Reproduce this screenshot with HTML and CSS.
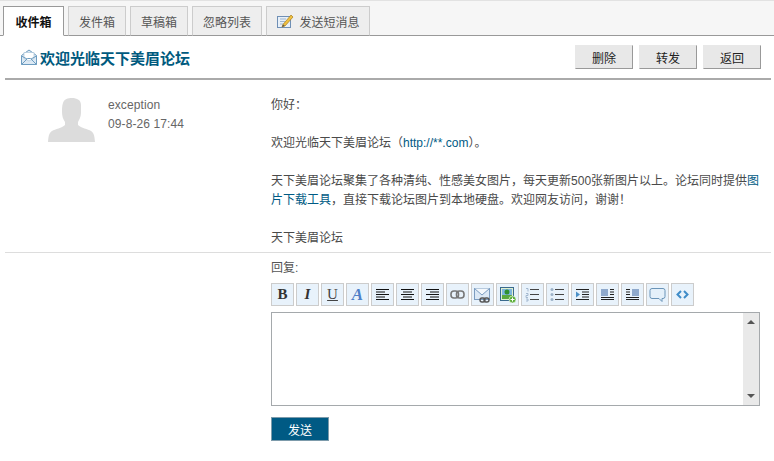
FILE: index.html
```html
<!DOCTYPE html>
<html lang="zh-CN">

<head>
  <meta charset="UTF-8" />
  <title>短消息</title>
  <link rel="stylesheet" href="styles.css">
</head>

<body>
  <nav class="tabs">
    <a class="tab tab-first valgt">收件箱</a>
    <a class="tab tab-out">发件箱</a>
    <a class="tab tab-draft">草稿箱</a>
    <a class="tab tab-ignore">忽略列表</a>
    <a class="tab tab-send">
      <svg width="18" height="16" viewBox="0 0 18 16">
        <rect x="1.500" y="3.500" width="13" height="11" fill="#e8f0f8" stroke="#6f8fb5" />
        <path d="M4 6h6M4 8.500h5M4 11h4" stroke="#9fb4cc" />
        <path d="M7 11.500 15 2l2 2-8 9-3 1z" fill="#f0c040" stroke="#a87c18" stroke-width=".7" />
        <path d="M6 14l1-2.500 1.800 1.300z" fill="#555" />
      </svg>
      发送短消息
    </a>
  </nav>

  <header class="title-row">
    <h1 class="title">
      <svg width="18" height="18" viewBox="0 0 18 18">
        <path d="M1.500 7.500 9 2l7.500 5.500V16.500H1.500z" fill="#dce9f4" stroke="#6d9cc0" />
        <path d="M4 4.500h10v6L9 13 4 10.500z" fill="#fff" stroke="#a9c4d9" stroke-width=".7" />
        <path d="M1.500 16.500 7.500 10.500h3l6 6M1.500 8 7 11M16.500 8 11 11" fill="none" stroke="#6d9cc0" />
      </svg>
      欢迎光临天下美眉论坛
    </h1>
    <div class="actions">
      <button class="knap">删除</button>
      <button class="knap">转发</button>
      <button class="knap">返回</button>
    </div>
  </header>

  <section class="message">
    <div class="avatar">
      <svg width="47" height="44" viewBox="0 0 47 44">
        <path d="M15 5C16 1 20 0 24 0 29 0 33 2 33 7L33 15C33 19 31 22 30 24L30 27C33 30 40 31 43 33 46 35 46.500 38 47 44H0C.5 38 1 35 4 33 7 31 14 30 17 27L17 24C15 21 14 18 14 14 14 10 14 8 15 5Z" fill="#dcdcdc" />
      </svg>
    </div>
    <div class="sender">
      <p>exception</p>
      <p>09-8-26 17:44</p>
    </div>
    <div class="body">
      <p class="para">你好<span class="punct">：</span></p>
      <p class="para">欢迎光临天下美眉论坛（<a href="#">http://**.com</a>）。</p>
      <p class="para">天下美眉论坛聚集了各种清纯、性感美女图片<span class="punct">，</span>每天更新500张新图片以上。论坛同时提供<a href="#">图</a><a href="#">片下载工具</a><span class="punct">，</span>直接下载论坛图片到本地硬盘。欢迎网友访问<span class="punct">，</span>谢谢<span class="punct">！</span></p>
      <p>天下美眉论坛</p>
    </div>
  </section>

  <section class="reply">
    <label class="reply-label">回复:</label>

    <div class="toolbar">
      <span class="tool"><b class="t-b">B</b></span>
      <span class="tool"><i class="t-i">I</i></span>
      <span class="tool"><u class="t-u">U</u></span>
      <span class="tool"><i class="t-a">A</i></span>
      <span class="tool"><svg width="15" height="13" viewBox="0 0 15 13"><path d="M1 1.500h13M1 4h9M1 6.500h13M1 9h9M1 11.500h13" stroke="#111" /></svg></span>
      <span class="tool"><svg width="15" height="13" viewBox="0 0 15 13"><path d="M1 1.500h13M3 4h9M1 6.500h13M3 9h9M1 11.500h13" stroke="#111" /></svg></span>
      <span class="tool"><svg width="15" height="13" viewBox="0 0 15 13"><path d="M1 1.500h13M5 4h9M1 6.500h13M5 9h9M1 11.500h13" stroke="#111" /></svg></span>
      <span class="tool"><svg width="15" height="9" viewBox="0 0 15 9"><rect x="1" y="1" width="7.500" height="7" rx="3" fill="none" stroke="#777" stroke-width="1.600" /><rect x="6.500" y="1" width="7.500" height="7" rx="3" fill="none" stroke="#777" stroke-width="1.600" /></svg></span>
      <span class="tool"><svg width="19" height="18" viewBox="0 0 19 18"><rect x="1.500" y="2.500" width="15" height="11" fill="#dbe8f5" stroke="#7b9cc0" /><path d="M1.500 2.500 9 9l7.500-6.500" fill="#f4f8fc" stroke="#7b9cc0" /><rect x="7" y="12" width="5" height="4" rx="2" fill="none" stroke="#555" stroke-width="1.400" /><rect x="11" y="12" width="5" height="4" rx="2" fill="none" stroke="#555" stroke-width="1.400" /></svg></span>
      <span class="tool"><svg width="18" height="18" viewBox="0 0 18 18"><rect x="1.500" y="1.500" width="13" height="13" fill="#dff0d0" stroke="#3a6a8c" /><rect x="3" y="3" width="10" height="6" fill="#7fb6de" /><circle cx="8" cy="6" r="2.500" fill="#2f8f2f" /><rect x="3" y="9" width="10" height="4" fill="#5aa83c" /><circle cx="13.500" cy="13.500" r="3.500" fill="#5cae3a" stroke="#fff" stroke-width=".6" /><path d="M11.500 13.500h4M13.500 11.500v4" stroke="#fff" /></svg></span>
      <span class="tool"><svg width="15" height="15" viewBox="0 0 15 15"><path d="M5 2.500h9M5 7.500h9M5 12.500h9" stroke="#444" /><path d="M1 1.500h2v3M1 6.500h2v2H1v2h2M1 12h2v2H1" fill="none" stroke="#8aa4c0" stroke-width=".7" /></svg></span>
      <span class="tool"><svg width="15" height="15" viewBox="0 0 15 15"><path d="M5 2.500h9M5 7.500h9M5 12.500h9" stroke="#444" /><circle cx="2" cy="2.500" r="1.500" fill="#9cb2c8" /><circle cx="2" cy="7.500" r="1.500" fill="#9cb2c8" /><circle cx="2" cy="12.500" r="1.500" fill="#9cb2c8" /></svg></span>
      <span class="tool"><svg width="15" height="13" viewBox="0 0 15 13"><path d="M1 1.500h13M7 4h7M7 6.500h7M7 9h7M1 11.500h13" stroke="#222" /><path d="M1 3.500 5 6.500 1 9.500z" fill="#4a90c8" /></svg></span>
      <span class="tool"><svg width="15" height="13" viewBox="0 0 15 13"><rect x="1" y="1" width="7" height="7" fill="#8fa9cc" /><path d="M10 1.500h4M10 4h4M10 6.500h4M1 9.500h13M1 11.500h13" stroke="#222" /></svg></span>
      <span class="tool"><svg width="15" height="13" viewBox="0 0 15 13"><rect x="7" y="1" width="7" height="7" fill="#8fa9cc" /><path d="M1 1.500h4M1 4h4M1 6.500h4M1 9.500h13M1 11.500h13" stroke="#222" /></svg></span>
      <span class="tool"><svg width="17" height="16" viewBox="0 0 17 16"><path d="M3 1.500h11a2 2 0 0 1 2 2v6a2 2 0 0 1-2 2h-1v3l-3-3H3a2 2 0 0 1-2-2v-6a2 2 0 0 1 2-2z" fill="#e4f0fa" stroke="#6a94b8" /></svg></span>
      <span class="tool"><svg width="13" height="9" viewBox="0 0 13 9"><path d="M5 1 1.500 4.500 5 8M8 1l3.500 3.500L8 8" fill="none" stroke="#3f8cc8" stroke-width="2" /></svg></span>
    </div>

    <div class="editor">
      <textarea class="editor-text"></textarea>
      <div class="scrollbar">
        <span class="arrow-up"></span>
        <span class="arrow-down"></span>
      </div>
    </div>

    <button class="send">发送</button>
  </section>
</body>

</html>
```

FILE: styles.css
```css
* {
  box-sizing: border-box;
}

body {
  margin: 0;
  background-color: white;
  color: #4a4a4a;
  font-family: "Liberation Sans", "Noto Sans CJK SC", Arial, sans-serif;
  font-size: 12px;
}

p {
  margin: 0;
}

a {
  color: #005a84;
  text-decoration: none;
}

.tabs {
  display: flex;
  align-items: flex-end;
  height: 36px;
  padding-left: 3px;
  border-top: 1px solid #e2e2e2;
  border-bottom: 1px solid #999;
  background-color: #f6f6f6;
}

.tab {
  display: flex;
  align-items: center;
  justify-content: center;
  gap: 5px;
  height: 30px;
  margin-right: 4px;
  margin-bottom: -1px;
  border: 1px solid #ccc;
  border-bottom-color: #999;
  background-color: #eee;
  color: #555;
}

.tab-first {
  width: 61px;
}

.tab-out,
.tab-draft {
  width: 58px;
}

.tab-ignore {
  width: 70px;
}

.tab-send {
  width: 104px;
}

.valgt {
  border-color: #999;
  border-bottom-color: white;
  background-color: white;
  color: #111;
  font-weight: bold;
}

.title-row {
  display: flex;
  align-items: center;
  justify-content: space-between;
  height: 44px;
  margin: 0 3px 0 5px;
  padding: 0 10px 0 15px;
  border-bottom: 2px solid #aaa;
}

.title {
  display: flex;
  align-items: center;
  gap: 2px;
  margin: 0;
  color: #005a7e;
  font-size: 15px;
  font-weight: bold;
}

.actions {
  display: flex;
  gap: 6px;
}

.knap {
  width: 58px;
  height: 24px;
  padding: 0;
  border: 1px solid #e8e8e8;
  border-right-color: #999;
  border-bottom-color: #999;
  background-color: #e8e8e8;
  color: #222;
  font-family: inherit;
  font-size: 12px;
}

.message {
  display: flex;
  height: 173px;
  margin: 0 3px 0 5px;
  border-bottom: 1px solid #ddd;
}

.avatar {
  width: 103px;
  padding: 18px 0 0 43px;
}

.sender {
  width: 163px;
  padding-top: 16px;
  color: #666;
  letter-spacing: 0.1px;
  line-height: 19px;
}

.body {
  width: 492px;
  padding-top: 16px;
  line-height: 19px;
}

.para {
  margin-bottom: 19px;
}

/* these marks sit in the middle of their square in the reference */
.punct {
  font-family: "Noto Sans CJK TC", sans-serif;
  line-height: 0;
}

.reply {
  padding: 6px 0 0 271px;
}

.reply-label {
  display: block;
  height: 24px;
  color: #555;
  line-height: 19px;
}

.toolbar {
  display: flex;
  gap: 2px;
  height: 23px;
}

.tool {
  display: flex;
  align-items: center;
  justify-content: center;
  width: 23px;
  height: 23px;
  border: 1px solid #ccc;
  background-color: #e8f2fb;
  font-family: "Liberation Serif", serif;
  font-size: 15px;
  overflow: hidden;
}

.t-b {
  color: #333;
}

.t-i {
  color: #333;
  font-weight: bold;
}

.t-u {
  color: #444;
}

.t-a {
  color: #4f80c8;
  font-size: 17px;
  font-weight: bold;
}

.editor {
  display: flex;
  width: 489px;
  height: 94px;
  margin-top: 6px;
  border: 1px solid #a5a9ac;
}

.editor-text {
  flex: 1;
  border: 0;
  outline: 0;
  resize: none;
  overflow: hidden;
}

.scrollbar {
  display: flex;
  flex-direction: column;
  justify-content: space-between;
  align-items: center;
  width: 16px;
  padding: 7px 0;
  background-color: #e9e9e9;
}

.arrow-up {
  border: 4px solid transparent;
  border-top: 0;
  border-bottom: 4px solid #555;
}

.arrow-down {
  border: 4px solid transparent;
  border-bottom: 0;
  border-top: 4px solid #555;
}

.send {
  display: block;
  width: 58px;
  height: 24px;
  margin-top: 11px;
  padding: 0;
  border: 1px solid #7d9bab;
  background-color: #005a84;
  color: white;
  font-family: inherit;
  font-size: 12px;
}
```
